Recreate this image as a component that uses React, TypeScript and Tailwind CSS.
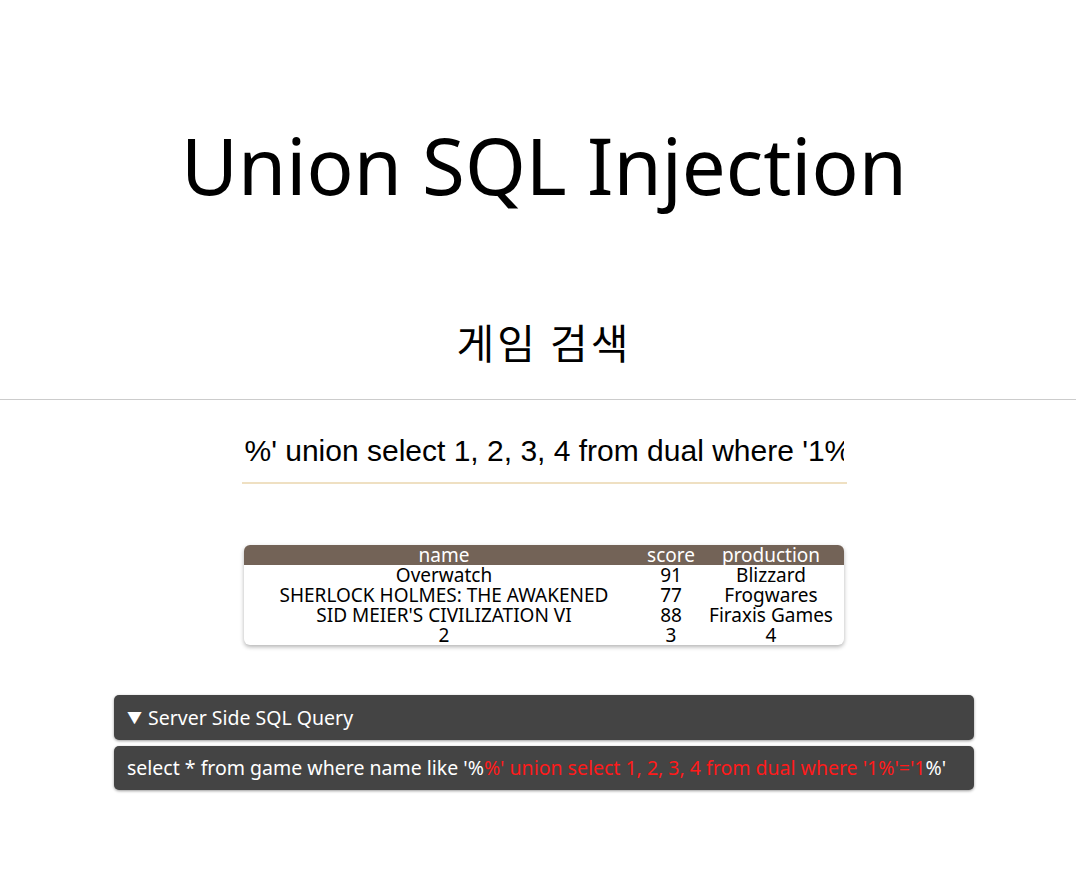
import React, { useState } from "react";

const games = [
  { name: "Overwatch", score: "91", production: "Blizzard" },
  { name: "SHERLOCK HOLMES: THE AWAKENED", score: "77", production: "Frogwares" },
  { name: "SID MEIER'S CIVILIZATION VI", score: "88", production: "Firaxis Games" },
  { name: "2", score: "3", production: "4" },
];

const payload = "%' union select 1, 2, 3, 4 from dual where '1%'='1";

export default function App() {
  const [keyword, setKeyword] = useState(payload);
  const [open, setOpen] = useState(true);

  return (
    <div
      className="min-h-[896px] bg-white text-black"
      style={{ fontFamily: '"Noto Sans", "Noto Sans CJK KR", sans-serif' }}
    >
      <div className="pl-[12px] pt-[117px] text-center">
        <h1 className="text-[78px] leading-[96px] font-normal">Union SQL Injection</h1>
        <h2
          className="mt-[104px] text-[41px] leading-[48px] font-normal tracking-[3px]"
          style={{ fontFamily: '"Noto Sans CJK KR", sans-serif' }}
        >
          게임 검색
        </h2>
      </div>

      <hr className="mt-[34px] border-0 border-t border-[#cccccc]" />

      <div className="pl-[12px]">
        <div className="mt-[20px] flex justify-center">
          <input
            value={keyword}
            onChange={(e) => setKeyword(e.target.value)}
            className="w-[605px] h-[64px] px-[3px] text-[30px] outline-none border-0 border-b-2 border-[#efe0c2] bg-transparent"
            style={{ fontFamily: '"Liberation Sans", Arial, sans-serif' }}
          />
        </div>

        <div className="mt-[61px] flex justify-center">
          <div className="w-[600px] rounded-[6px] overflow-hidden bg-white shadow-[0_2px_4px_rgba(0,0,0,0.3)]">
            <table className="w-full table-fixed border-collapse text-[19px] leading-[20px] text-center">
              <thead className="bg-[#736357] text-white">
                <tr className="h-[20px]">
                  <th className="w-[400px] p-0 font-normal">name</th>
                  <th className="w-[54px] p-0 font-normal">score</th>
                  <th className="p-0 font-normal">production</th>
                </tr>
              </thead>
              <tbody>
                {games.map((g) => (
                  <tr key={g.name} className="h-[20px]">
                    <td className="p-0 whitespace-nowrap">{g.name}</td>
                    <td className="p-0">{g.score}</td>
                    <td className="p-0 whitespace-nowrap">{g.production}</td>
                  </tr>
                ))}
              </tbody>
            </table>
          </div>
        </div>

        <div className="mt-[50px] mx-auto w-[860px] flex flex-col gap-[6px] text-white text-[19.5px]">
          <button
            onClick={() => setOpen(!open)}
            className="h-[45px] px-[13px] flex items-center gap-[6px] text-left rounded-[5px] bg-[#444444] shadow-[0_1px_3px_rgba(0,0,0,0.4)]"
          >
            <span className="text-[15px]">{open ? "▼" : "▶"}</span>
            <span>Server Side SQL Query</span>
          </button>
          {open && (
            <div className="h-[44px] px-[13px] flex items-center rounded-[5px] bg-[#444444] shadow-[0_1px_3px_rgba(0,0,0,0.4)] whitespace-nowrap">
              <span>select * from game where name like '%</span>
              <span className="text-[#ff1a1a]">{keyword}</span>
              <span>%'</span>
            </div>
          )}
        </div>
      </div>
    </div>
  );
}
